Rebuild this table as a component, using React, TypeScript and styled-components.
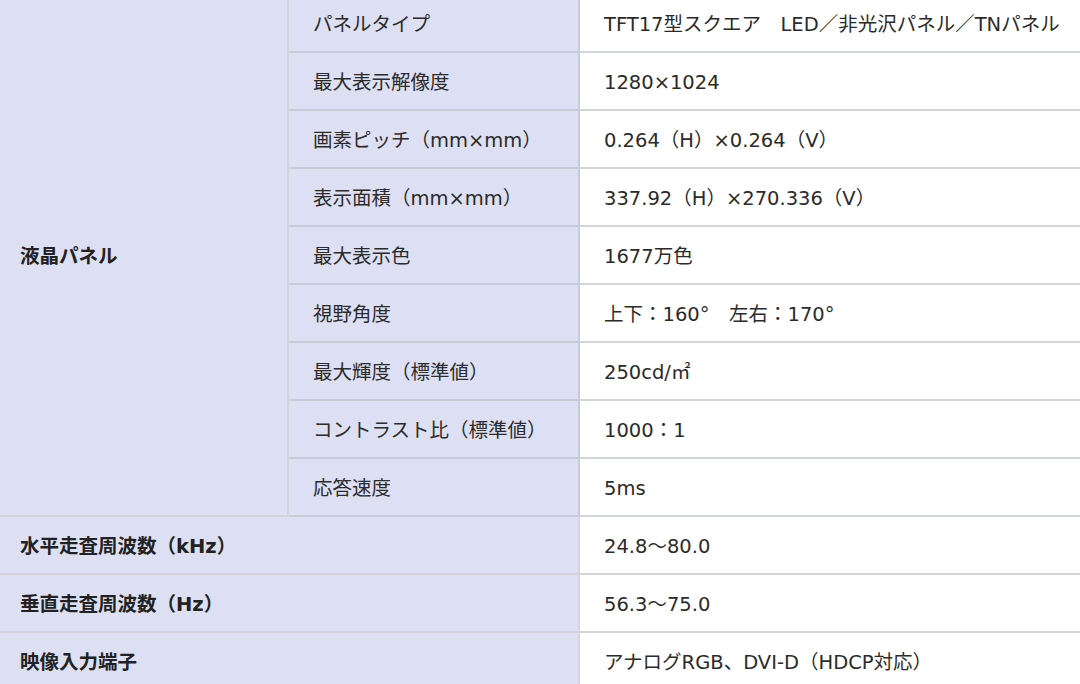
import React from 'react';
import styled, { createGlobalStyle } from 'styled-components';

const GlobalStyle = createGlobalStyle`
	html, body {
		margin: 0;
		padding: 0;
		background: #ffffff;
		overflow: hidden;
	}
`;

const SpecTable = styled.table`
	width: 1090px;
	margin: -7px 0 0 -6px;
	border-collapse: collapse;
	table-layout: fixed;
	font-family: 'DejaVu Sans', 'Noto Sans CJK JP', sans-serif;
	font-size: 19.5px;
	color: #2b2b2b;

	td,
	th {
		height: 53px;
		padding: 3px 0 0 24px;
		border: 2px solid #d4d5dc;
		text-align: left;
		vertical-align: middle;
		white-space: nowrap;
		line-height: 1.2;
	}
`;

const Heading = styled.th`
	background: #dde0f2;
	font-weight: 700;
	color: #222222;
`;

const SubHeading = styled.td`
	background: #dde0f2;
	border-color: #c9cbd9 !important;
`;

const Value = styled.td`
	background: #ffffff;
`;

type Spec = { label: string; value: string };

const panelSpecs: Spec[] = [
	{ label: 'パネルタイプ', value: 'TFT17型スクエア　LED／非光沢パネル／TNパネル' },
	{ label: '最大表示解像度', value: '1280×1024' },
	{ label: '画素ピッチ（mm×mm）', value: '0.264（H）×0.264（V）' },
	{ label: '表示面積（mm×mm）', value: '337.92（H）×270.336（V）' },
	{ label: '最大表示色', value: '1677万色' },
	{ label: '視野角度', value: '上下：160°　左右：170°' },
	{ label: '最大輝度（標準値）', value: '250cd/㎡' },
	{ label: 'コントラスト比（標準値）', value: '1000：1' },
	{ label: '応答速度', value: '5ms' },
];

const otherSpecs: Spec[] = [
	{ label: '水平走査周波数（kHz）', value: '24.8～80.0' },
	{ label: '垂直走査周波数（Hz）', value: '56.3～75.0' },
	{ label: '映像入力端子', value: 'アナログRGB、DVI-D（HDCP対応）' },
];

export default function App() {
	return (
		<>
			<GlobalStyle />
			<SpecTable>
				<colgroup>
					<col style={{ width: 293 }} />
					<col style={{ width: 291 }} />
					<col />
				</colgroup>
				<tbody>
					{panelSpecs.map((spec, i) => (
						<tr key={spec.label}>
							{i === 0 && (
								<Heading rowSpan={panelSpecs.length}>液晶パネル</Heading>
							)}
							<SubHeading>{spec.label}</SubHeading>
							<Value>{spec.value}</Value>
						</tr>
					))}
					{otherSpecs.map((spec) => (
						<tr key={spec.label}>
							<Heading colSpan={2}>{spec.label}</Heading>
							<Value>{spec.value}</Value>
						</tr>
					))}
				</tbody>
			</SpecTable>
		</>
	);
}
